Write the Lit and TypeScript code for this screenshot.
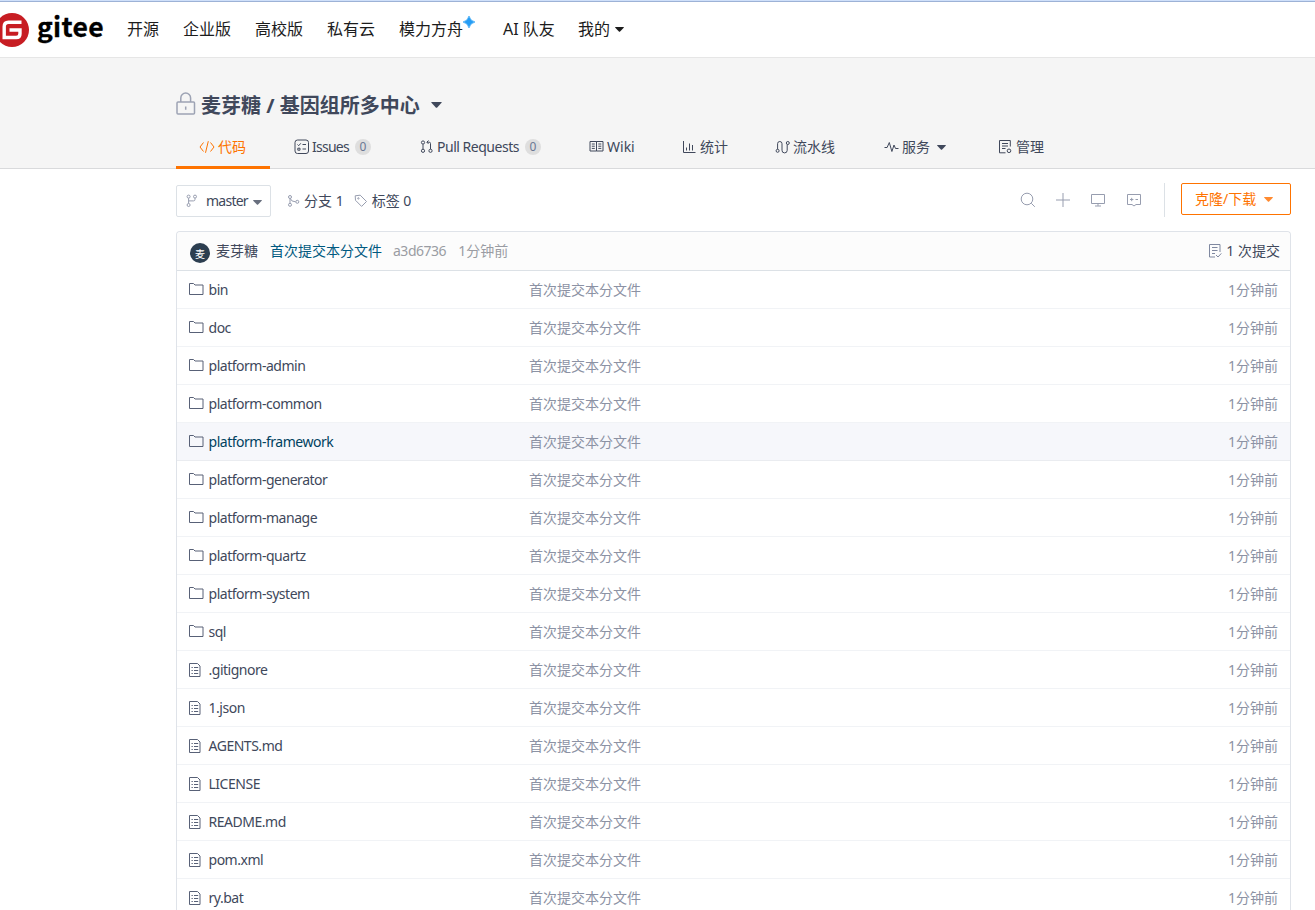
import { LitElement, html, css, svg } from "lit";
import { customElement } from "lit/decorators.js";
import { classMap } from "lit/directives/class-map.js";

const icon = (w: number, h: number, body: unknown, cls = "") =>
  html`<svg class="icon ${cls}" width=${w} height=${h} viewBox="0 0 ${w} ${h}">${body}</svg>`;

const caret = (w = 9, h = 5) =>
  html`<svg class="caret" width=${w} height=${h} viewBox="0 0 9 5"><path d="M0.6 0h7.8q.9 0 .3.7L5.1 4.6q-.6.5-1.2 0L.3.7Q-.3 0 .6 0z" fill="currentColor"/></svg>`;

const icons = {
  lock: icon(20, 24, svg`<rect x="1" y="10" width="17.5" height="12" rx="1"/><path d="M4.8 10V6a4.9 4.9 0 0 1 9.8 0v4M9.7 14.5v3.2"/>`, "w15"),
  code: icon(16, 14, svg`<path d="M4.500 2.500L1 7l3.500 4.500M11.500 2.500L15 7l-3.500 4.500M9.300 1.200L6.500 12.800"/>`),
  issues: icon(16, 16, svg`<rect x="1" y="1" width="13.500" height="13.500" rx="2.500"/><path d="M3.500 5.500l1.200 1.200L6.800 4.300M8.500 5.500H12M8.500 10H12M3.800 9.200h2.200v2H3.800z"/>`),
  pull: icon(14, 16, svg`<circle cx="3" cy="3.500" r="1.600"/><circle cx="3" cy="11.800" r="1.600"/><circle cx="10.500" cy="11.800" r="1.600"/><path d="M3 5.200v5M10.500 10.200V4.500q0-1.300-1.300-1.300H7M8.500 1.500L6.800 3.200l1.700 1.700"/>`),
  wiki: icon(16, 14, svg`<path d="M1 1.500h6.500v9.500H1zM7.500 1.500h6.500v9.500H7.500zM2.800 4h3M2.800 6.200h3M2.800 8.400h3M9.300 4h3M9.300 6.200h3M9.300 8.400h3"/>`),
  stats: icon(14, 14, svg`<path d="M.5 1v11.500h12M3.500 10.500V7.500M6.500 10.500V3.500M9.500 10.500V5"/>`),
  pipe: icon(16, 14, svg`<circle cx="2.600" cy="10.800" r="1.500"/><circle cx="12.800" cy="3" r="1.500"/><path d="M2.600 9.200V3.700a2.200 2.200 0 0 1 4.400 0v6.500a2.600 2.600 0 0 0 5.200.2V4.600"/>`),
  pulse: icon(15, 12, svg`<path d="M.5 6.500h2.600L5.300 1.500l2.600 9L10 4l1.500 3.500h3"/>`),
  manage: icon(15, 16, svg`<path d="M12.300 7.500V1.500H1.500v12.300h6M4 4.500h6M4 7h6M4 9.500h3.500"/><circle cx="11" cy="11.800" r="1.800"/>`),
  branch: icon(12, 14, svg`<circle cx="2.600" cy="2.600" r="1.500"/><circle cx="2.600" cy="11" r="1.500"/><circle cx="9" cy="2.600" r="1.500"/><path d="M2.600 4.200v5.200M9 4.200v1.200q0 1.500-1.500 1.500H2.600"/>`, "pale"),
  branches: icon(13, 14, svg`<circle cx="3" cy="3" r="1.500"/><circle cx="3" cy="10.800" r="1.500"/><circle cx="10.300" cy="7.800" r="1.500"/><path d="M3 4.600v4.600M3.300 4.600q1 3.200 5.300 3.200"/>`, "pale"),
  tag: icon(14, 14, svg`<path d="M1.200 1.800l5-.6 6.300 6.300-4.900 4.900L1.500 6.300z"/><circle cx="4.400" cy="4.400" r=".7"/>`, "pale"),
  search: icon(16, 16, svg`<circle cx="7" cy="7" r="5.800"/><path d="M11.300 11.300l3.500 3.500"/>`, "pale"),
  plus: icon(16, 16, svg`<path d="M1 8h14M8 1v14"/>`, "pale"),
  screen: icon(16, 16, svg`<path d="M1.500 2.500h13v9h-13zM8 11.500v2.300M5 14h6"/>`, "pale"),
  chat: icon(16, 16, svg`<path d="M1.500 2.500h13v10h-4.500L8 14l-2-1.500H1.500zM4 7.500h3.400M5.700 5.800v3.400M9.500 7.500H12"/>`, "pale"),
  commits: icon(14, 16, svg`<path d="M12 9V1.500H1.500v12.500H7M4 4.500h5.500M4 7.500h5.500M4 10.500h3M8 12l2 2 3.300-3.600"/>`, "mid"),
  folder: icon(16, 14, svg`<path d="M1.500 12.500v-11h4l1.500 1.500h8v9.500z"/>`),
  file: icon(14, 16, svg`<path d="M1.500 1.500h8l2.500 2.500v10.500H1.500z"/><path d="M3.500 5.500h1.300M6 5.500h4.200M3.500 8.500h1.300M6 8.500h4.200M3.500 11.500h1.300M6 11.500h4.200"/>`, "file"),
};

interface Entry { name: string; dir?: boolean; hovered?: boolean }
const entries: Entry[] = [
  { name: "bin", dir: true }, { name: "doc", dir: true },
  { name: "platform-admin", dir: true }, { name: "platform-common", dir: true },
  { name: "platform-framework", dir: true, hovered: true },
  { name: "platform-generator", dir: true }, { name: "platform-manage", dir: true },
  { name: "platform-quartz", dir: true }, { name: "platform-system", dir: true },
  { name: "sql", dir: true }, { name: ".gitignore" }, { name: "1.json" },
  { name: "AGENTS.md" }, { name: "LICENSE" }, { name: "README.md" },
  { name: "pom.xml" }, { name: "ry.bat" },
];

@customElement("app-root")
export class AppRoot extends LitElement {
  static styles = css`
    * { box-sizing: border-box; }
    :host {
      display: block; height: 910px; overflow: hidden; background: #fff; color: #40485b;
      font: 14px/20px "Noto Sans", "Noto Sans CJK SC", sans-serif; white-space: nowrap;
    }
    svg { display: block; flex: none; overflow: visible; }
    .icon { fill: none; stroke: currentColor; stroke-width: 1; }
    .w15 { stroke-width: 1.5; color: #9da3b4; }
    .pale { color: #979daf; }
    .mid { color: #7f88a0; }
    .top { display: flex; height: 58px; border-top: 1px solid #cfe0fa; border-bottom: 1px solid #e6e6e6; }
    .edge { flex: none; width: 100%; height: 1px; margin-right: -100%; background: #9db2d6; }
    .brand { display: flex; width: 127px; padding-top: 12px; }
    .brand svg { margin-left: -5px; }
    .brand span { margin: -7px 0 0 8px; font: 700 26.5px/40px "Noto Sans CJK SC", sans-serif; color: #000; -webkit-text-stroke: 0.3px #000; letter-spacing: 0.3px; }
    .nav { display: flex; padding-top: 16px; font-size: 16px; line-height: 24px; color: #1c1c1c; }
    .nav div { display: flex; }
    .n1 { width: 56px; } .n2 { width: 72px; } .n4 { width: 72px; } .n5 { width: 104px; } .n6 { width: 75px; }
    .nav .caret { margin: 10px 0 0 5px; }
    .nav .star { margin: -1px 0 0 0; }
    .head { height: 111px; background: #f5f5f5; border-bottom: 1px solid #d9dadc; padding: 34px 0 0 176px; }
    .title { display: flex; height: 34px; font-size: 20px; line-height: 28px; font-weight: 700; }
    .title span { margin-left: 5px; }
    .title .caret { margin: 10px 0 0 11px; }
    .tabs { display: flex; height: 43px; }
    .tab { display: flex; align-items: center; height: 43px; padding-bottom: 1px; }
    .tab.active { color: #fe7300; border-bottom: 3px solid #fe7300; padding: 2px 0 0 23px; }
    .tab .icon { margin: -1px 3px 0 0; }
    .tab .caret { margin-left: 7px; }
    .tab.t2 .icon, .tab.t4 .icon, .tab.t6 .icon { margin-right: 2px; }
    .tight { letter-spacing: -0.48px; }
    .tighter { letter-spacing: -0.75px; }
    .count { width: 16px; height: 16px; margin-left: 6px; border-radius: 8px; background: #dedede; color: #6b7894; font-size: 12px; line-height: 16px; text-align: center; }
    .t1 { width: 94px; margin-right: 24px; }
    .t2 { width: 126px; } .t3 { width: 169px; } .t4 { width: 94px; } .t5 { width: 92px; } .t6 { width: 109px; } .t7 { width: 114px; }
    .tools { display: flex; align-items: center; height: 62px; width: 1291px; padding: 0 0 0 176px; }
    .select { display: flex; align-items: center; width: 95px; height: 32px; margin: 2px 16px 0 0; padding-left: 9px; border: 1px solid #dce1e6; border-radius: 2px; }
    .select span { margin-left: 8px; }
    .select .caret { margin: 2px 0 0 5px; color: #686f7e; }
    .refs { display: flex; align-items: center; padding-top: 2px; }
    .refs span { margin: 0 10px 0 4px; }
    .acts { display: flex; align-items: center; margin-left: auto; }
    .a { width: 35px; } .a3 { width: 36px; } .a4 { width: 38px; }
    .sep { width: 1px; height: 34px; margin-right: 16px; background: #dce1e6; }
    .clone { display: flex; align-items: center; width: 110px; height: 32px; margin-top: -2px; padding-left: 13px; border: 1px solid #fe7300; border-radius: 2px; color: #fe7300; }
    .clone .caret { margin-left: 8px; color: #ff8a30; }
    .panel { width: 1115px; margin-left: 176px; border: 1px solid #dfe3e9; border-bottom: 0; border-radius: 4px 4px 0 0; }
    .latest { display: flex; align-items: center; height: 39px; padding: 0 10px 0 13px; background: #fcfcfc; border-bottom: 1px solid #dce1e6; border-radius: 4px 4px 0 0; }
    .avatar { width: 20px; height: 20px; margin: 3px 6px 0 0; border-radius: 10px; background: #2c3e50; color: #fff; font-size: 10px; line-height: 22px; text-align: center; }
    .msg { margin-left: 12px; color: #005980; }
    .dim { margin-left: 12px; color: #9a9ca3; }
    .dim.tight { margin-left: 11px; }
    .total { display: flex; align-items: center; margin-left: auto; }
    .total .icon { margin-right: 4px; }
    .row { display: flex; align-items: center; height: 38px; padding: 0 12px; border-bottom: 1px solid #f1f3f6; }
    .row.hovered { background: #f6f7fb; border-color: #eaecf0; }
    .row.hovered .name { color: #00425f; }
    .glyph { width: 19.5px; color: #586177; }
    .glyph .icon { margin: -1px 0 0 -1px; }
    .glyph .file { margin-top: 1px; }
    .name { width: 320.5px; margin-top: 1px; }
    .note, .when { color: #8c92a4; }
    .when { margin-left: auto; }
  `;

  render() {
    return html`
      <div class="top">
        <div class="edge"></div>
        <div class="brand">
          <svg width="34" height="34" viewBox="0 0 34 34"><circle cx="17" cy="17" r="17" fill="#c71d23"/><path d="M26.500 9.200H13.500Q9.200 9.200 9.200 13.500V24.500h12q3.800 0 3.800-3.800V17H14.500" fill="none" stroke="#fff" stroke-width="3.400"/></svg>
          <span>gitee</span>
        </div>
        <div class="nav">
          <div class="n1">开源</div><div class="n2">企业版</div><div class="n2">高校版</div><div class="n4">私有云</div>
          <div class="n5">模力方舟<svg class="star" width="12" height="12" viewBox="0 0 12 12"><path d="M6 0Q7.200 4.800 12 6 7.200 7.200 6 12 4.800 7.200 0 6 4.800 4.800 6 0z" fill="#259df5" stroke="#259df5" stroke-width=".6"/></svg></div>
          <div class="n6">AI 队友</div><div>我的${caret()}</div>
        </div>
      </div>
      <div class="head">
        <div class="title">${icons.lock}<span>麦芽糖 / 基因组所多中心</span>${caret(11, 6)}</div>
        <div class="tabs">
          <div class="tab active t1">${icons.code}代码</div>
          <div class="tab t2">${icons.issues}<span class="tighter">Issues</span><span class="count">0</span></div>
          <div class="tab t3">${icons.pull}<span class="tight">Pull Requests</span><span class="count">0</span></div>
          <div class="tab t4">${icons.wiki}Wiki</div>
          <div class="tab t5">${icons.stats}统计</div>
          <div class="tab t6">${icons.pipe}流水线</div>
          <div class="tab t7">${icons.pulse}服务${caret()}</div>
          <div class="tab">${icons.manage}管理</div>
        </div>
      </div>
      <div class="tools">
        <div class="select">${icons.branch}<span class="tighter">master</span>${caret()}</div>
        <div class="refs">${icons.branches}<span>分支 1</span>${icons.tag}<span>标签 0</span></div>
        <div class="acts">
          <div class="a">${icons.search}</div><div class="a">${icons.plus}</div>
          <div class="a3">${icons.screen}</div><div class="a4">${icons.chat}</div>
          <div class="sep"></div>
          <div class="clone">克隆/下载${caret()}</div>
        </div>
      </div>
      <div class="panel">
        <div class="latest">
          <div class="avatar">麦</div><span>麦芽糖</span><span class="msg">首次提交本分文件</span>
          <span class="dim tight">a3d6736</span><span class="dim">1分钟前</span>
          <div class="total">${icons.commits}<span>1 次提交</span></div>
        </div>
        ${entries.map((e) => html`
          <div class=${classMap({ row: true, hovered: !!e.hovered })}>
            <div class="glyph">${e.dir ? icons.folder : icons.file}</div>
            <span class="name tight">${e.name}</span><span class="note">首次提交本分文件</span><span class="when">1分钟前</span>
          </div>`)}
      </div>`;
  }
}
